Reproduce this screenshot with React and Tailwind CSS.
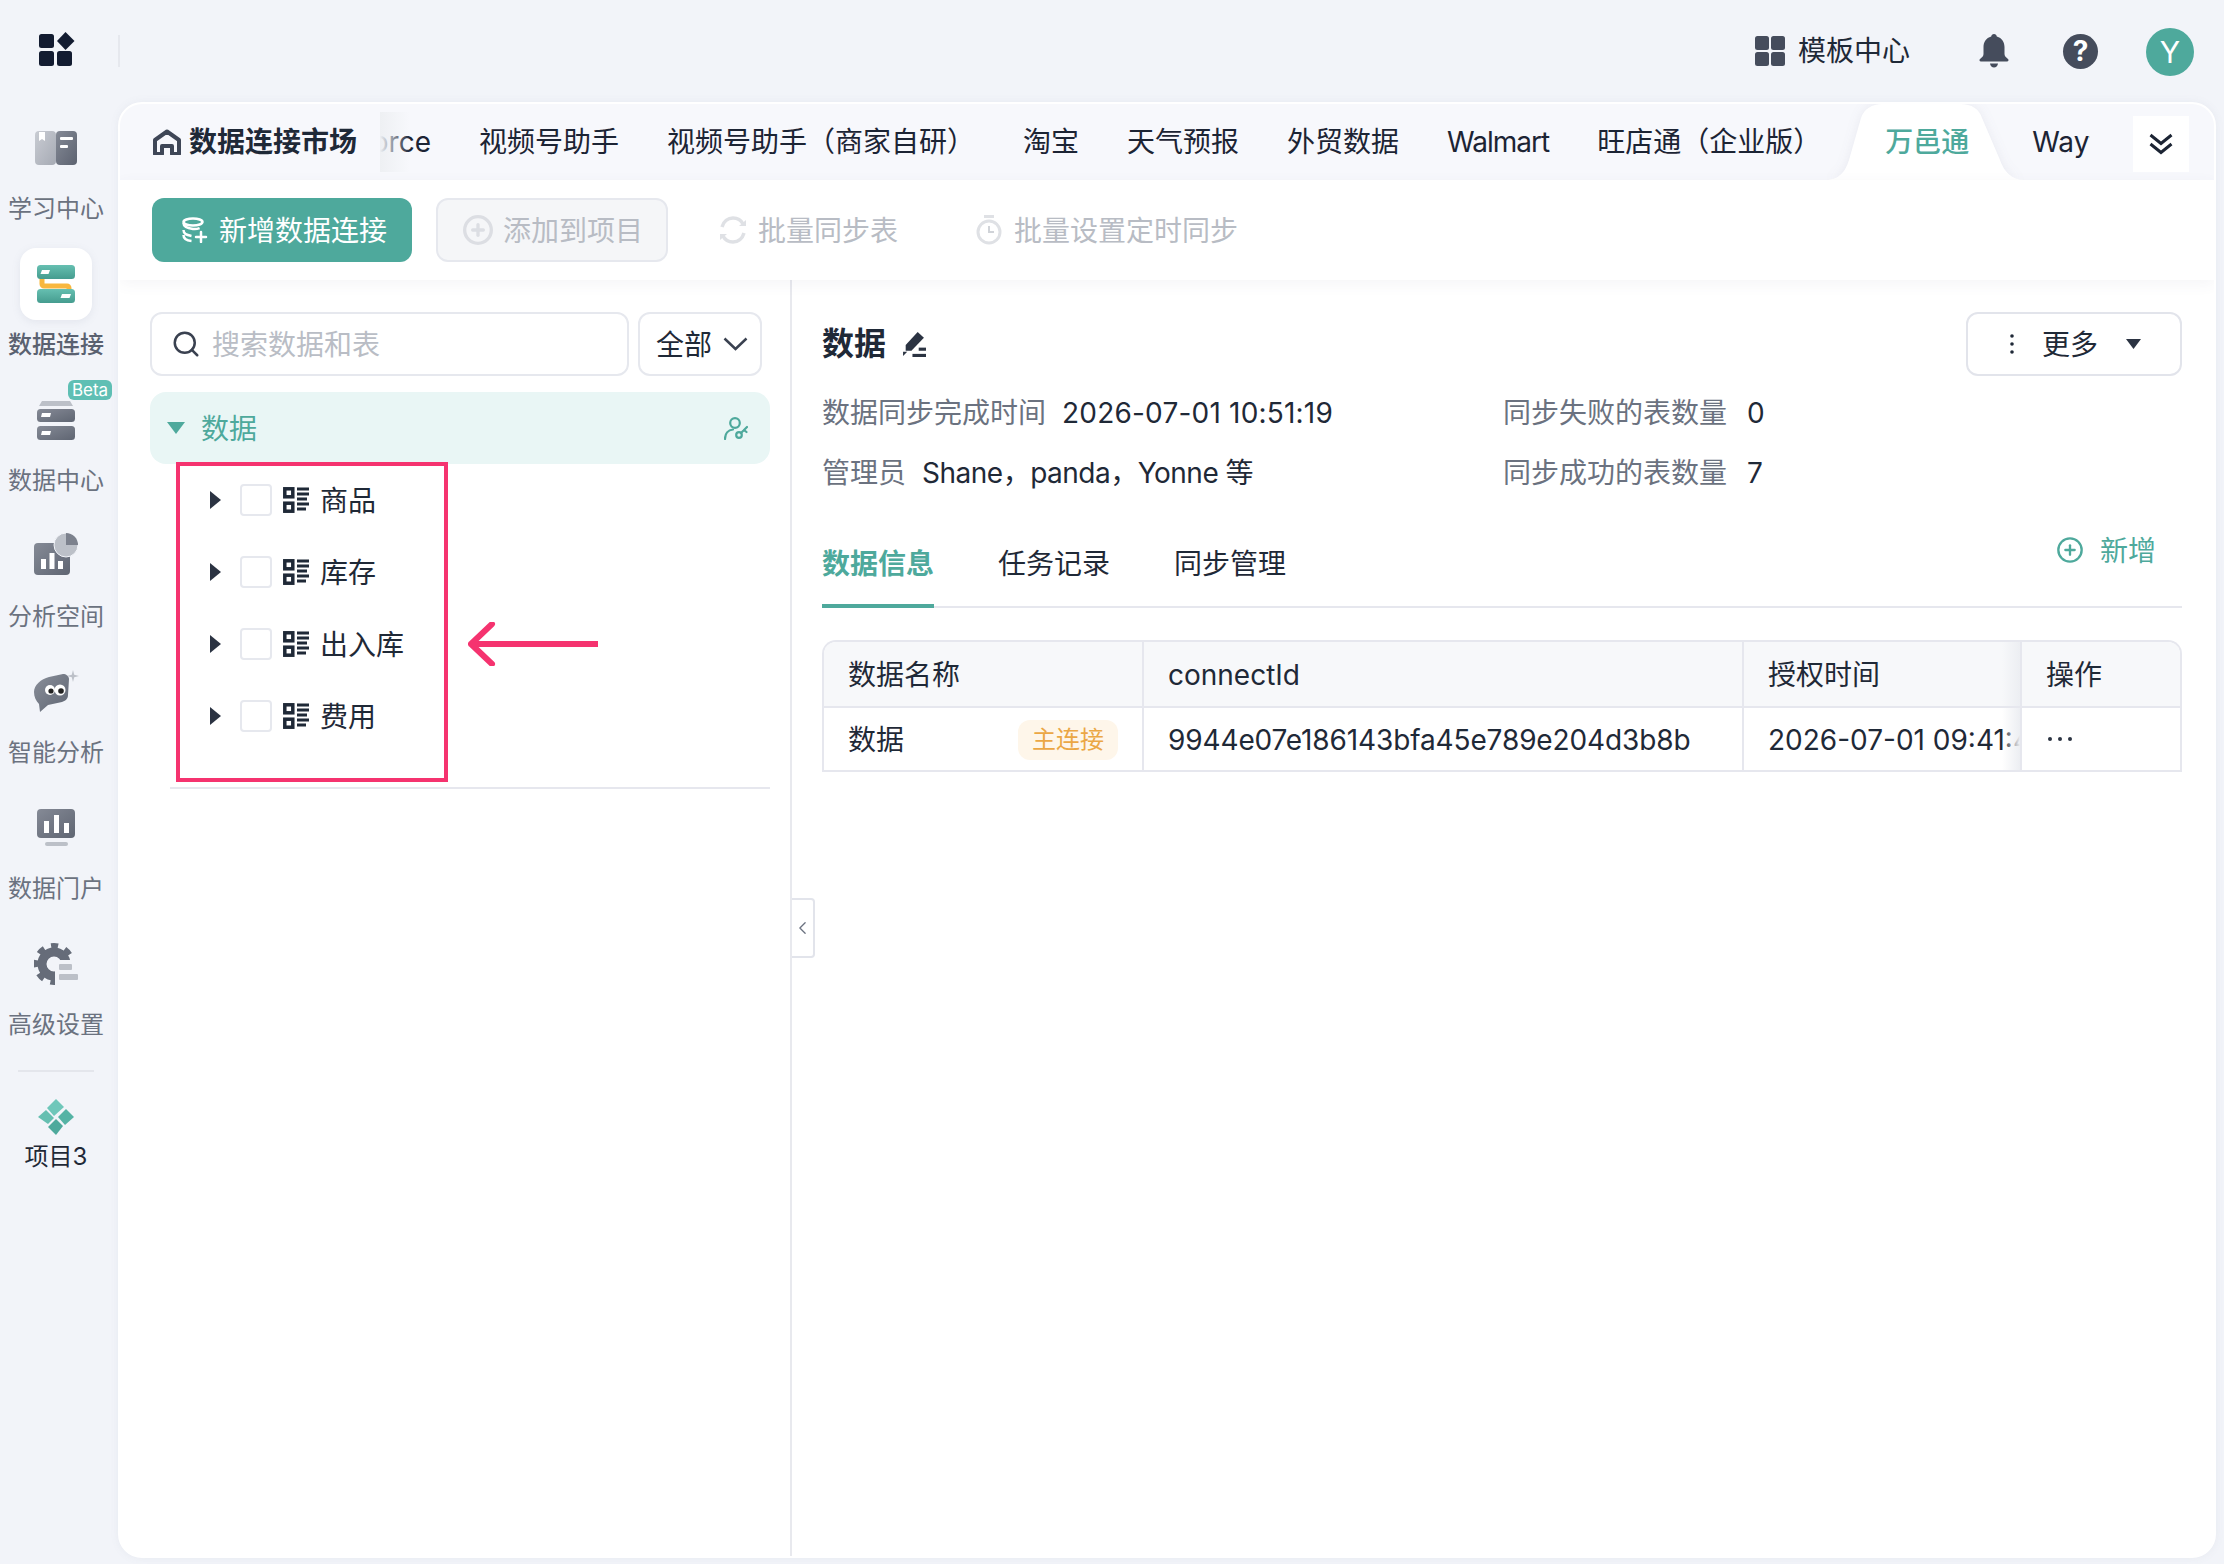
import { Search, ChevronLeft, CirclePlus } from "lucide-react";

const Grad = ({ id, from, to }) => (
  <linearGradient id={id} x1="0" y1="0" x2="1" y2="1">
    <stop offset="0" stopColor={from} />
    <stop offset="1" stopColor={to} />
  </linearGradient>
);

const BookIcon = () => (
  <svg width="42" height="34" viewBox="0 0 42 34">
    <defs>
      <Grad id="bookL" from="#c9ccd3" to="#a6aab4" />
      <Grad id="bookR" from="#858a96" to="#5c6270" />
    </defs>
    <rect x="0" y="0" width="21" height="34" rx="4" fill="url(#bookL)" />
    <rect x="21" y="0" width="21" height="34" rx="4" fill="url(#bookR)" />
    <path d="M4 1h6v9l-3-2-3 2z" fill="#fff" />
    <rect x="25" y="6" width="13" height="3" rx="1" fill="#fff" />
    <rect x="25" y="14" width="8" height="3" rx="1" fill="#fff" />
  </svg>
);

const ConnectIcon = () => (
  <svg width="38" height="38" viewBox="0 0 38 38">
    <defs>
      <linearGradient id="connT" x1="0" y1="0" x2="0" y2="1">
        <stop offset="0" stopColor="#66bfb1" />
        <stop offset="1" stopColor="#459c8f" />
      </linearGradient>
    </defs>
    <path d="M5 12v7a2 2 0 0 0 2 2h23a2 2 0 0 1 2 2v5" fill="none" stroke="#f8b73f" strokeWidth="5" />
    <rect x="0" y="0" width="38" height="14" rx="3.5" fill="url(#connT)" />
    <rect x="0" y="24" width="38" height="14" rx="3.5" fill="url(#connT)" />
    <path d="M5 5h8l-1.5 4H3.5z" fill="#fff" />
    <path d="M25 29h9l-1.5 4H23.5z" fill="#fff" />
  </svg>
);

const CenterIcon = () => (
  <svg width="38" height="39" viewBox="0 0 38 39">
    <defs>
      <Grad id="centerD" from="#858a96" to="#5f6572" />
    </defs>
    <path d="M5 0h28l3 5H2z" fill="#bcc0c8" />
    <rect x="0" y="8" width="38" height="13" rx="3.5" fill="url(#centerD)" />
    <rect x="0" y="25" width="38" height="14" rx="3.5" fill="url(#centerD)" />
    <path d="M5 12h9l-1 4H4z" fill="#fff" />
    <path d="M5 30h9l-1 4H4z" fill="#fff" />
  </svg>
);

const SpaceIcon = () => (
  <svg className="-mt-[4px]" width="44" height="42" viewBox="0 0 44 42">
    <defs>
      <Grad id="spaceD" from="#858a96" to="#5f6572" />
    </defs>
    <rect x="0" y="10" width="36" height="32" rx="4" fill="url(#spaceD)" />
    <rect x="7" y="26" width="5" height="10" fill="#fff" />
    <rect x="15.5" y="20" width="5" height="16" fill="#fff" />
    <rect x="24" y="28" width="5" height="8" fill="#fff" />
    <circle cx="32" cy="12" r="12" fill="#bcc0c8" stroke="#f2f4f9" strokeWidth="1" />
    <path d="M32 0a12 12 0 0 1 12 12H32z" fill="#7c818d" />
  </svg>
);

const SmartIcon = () => (
  <svg width="46" height="44" viewBox="0 0 46 44">
    <defs>
      <Grad id="smartD" from="#8a8f9a" to="#5f6572" />
    </defs>
    <path d="M1 22c0-7 7-13 15-15l14-3c3 0 6 2 6 5l-1 16c0 4-3 6-6 7l-14 3-8 7-1-8c-3-3-5-7-5-12z" fill="url(#smartD)" />
    <circle cx="17" cy="20" r="5" fill="#fff" />
    <circle cx="27" cy="20" r="5.5" fill="#fff" />
    <circle cx="18" cy="21" r="2.6" fill="#222" />
    <circle cx="28" cy="21" r="2.8" fill="#222" />
    <path d="M40 0l1.2 4.8L46 6l-4.8 1.2L40 12l-1.2-4.8L34 6l4.8-1.2z" fill="#bcc0c8" />
  </svg>
);

const PortalIcon = () => (
  <svg width="38" height="38" viewBox="0 0 38 38">
    <defs>
      <Grad id="portalD" from="#858a96" to="#5f6572" />
    </defs>
    <rect x="0" y="0" width="38" height="29" rx="4" fill="url(#portalD)" />
    <rect x="7" y="12" width="5" height="12" fill="#fff" />
    <rect x="17" y="6" width="5" height="18" fill="#fff" />
    <rect x="27" y="14" width="5" height="10" fill="#fff" />
    <rect x="8" y="33" width="23" height="4" rx="2" fill="#bcc0c8" />
  </svg>
);

const SettingIcon = () => (
  <svg width="44" height="42" viewBox="0 0 44 42">
    <defs>
      <clipPath id="gearCut">
        <path d="M0 0H44V17H21V42H0z" />
      </clipPath>
    </defs>
    <g clipPath="url(#gearCut)" fill="none" stroke="#666c79">
      <circle cx="20" cy="21" r="12" strokeWidth="9" />
      <circle cx="20" cy="21" r="18" strokeWidth="6" strokeDasharray="7 7.14" strokeDashoffset="3.500" />
    </g>
    <rect x="25" y="21" width="13" height="6" rx="1" fill="#bcc0c8" />
    <rect x="25" y="31" width="19" height="6" rx="1" fill="#bcc0c8" />
  </svg>
);

const ProjectIcon = () => (
  <svg width="36" height="36" viewBox="0 0 36 36">
    <path d="M18 0l8 8-10 9-7-8z" fill="#6fc7ba" />
    <path d="M8 11l8 8-6 6-10-7z" fill="#66bfb1" />
    <path d="M28 10l8 8-9 8-7-8z" fill="#55b3a5" />
    <path d="M18 20l7 7-7 9-8-8z" fill="#4ea99c" />
  </svg>
);

const Logo = () => (
  <svg width="36" height="34" viewBox="0 0 36 34">
    <rect x="0" y="2" width="15" height="14" rx="2.5" fill="#131c31" />
    <rect x="0" y="19" width="15" height="15" rx="2.5" fill="#131c31" />
    <rect x="18" y="19" width="15" height="15" rx="2.5" fill="#131c31" />
    <path d="M26.5 0L35.5 9 26.5 18 18 9z" fill="#131c31" />
  </svg>
);

const GridIcon = () => (
  <svg width="30" height="30" viewBox="0 0 30 30" fill="#454c5c">
    <rect x="0" y="0" width="14" height="14" rx="2.5" />
    <rect x="16" y="0" width="14" height="14" rx="2.5" />
    <rect x="0" y="16" width="14" height="14" rx="2.5" />
    <rect x="16" y="16" width="14" height="14" rx="2.5" />
  </svg>
);

const BellIcon = () => (
  <svg width="30" height="35" viewBox="0 0 30 35" fill="#454c5c">
    <path d="M15 0c1.6 0 2.6 1 2.8 2.4C23 3.800 25.500 8 25.500 13v7c0 2 1.500 3.500 3.500 5 1 .8.6 2.500-1 2.500H2c-1.600 0-2-1.700-1-2.500 2-1.500 3.500-3 3.500-5v-7c0-5 2.500-9.200 7.700-10.600C12.400 1 13.400 0 15 0z" />
    <path d="M11 29.500h8c-.4 2.500-2 4-4 4s-3.600-1.500-4-4z" />
  </svg>
);

const HomeIcon = () => (
  <svg width="28" height="26" viewBox="0 0 28 26" fill="none" stroke="#3f4757" strokeWidth="4">
    <path d="M2 25V11L14 2.500l12 8.500v14h-7v-8H9v8z" strokeLinejoin="round" />
  </svg>
);

const DbPlusIcon = () => (
  <svg width="27" height="26" viewBox="0 0 27 26" fill="none" stroke="#fff" strokeWidth="2.500">
    <ellipse cx="12" cy="5" rx="9.500" ry="3.500" />
    <path d="M2.500 6c0 3 2 5 9.500 6 3 .4 5-.2 7-1" strokeDasharray="19 2" />
    <path d="M2.500 13c0 4 3 5 8 6" />
    <path d="M2.500 18c0 4 3 5.500 8 6" />
    <path d="M20 15v10M15 20h10" strokeLinecap="round" />
  </svg>
);

const SyncIcon = () => (
  <svg width="30" height="30" viewBox="0 0 30 30" fill="none" stroke="#dfe1e5" strokeWidth="3.500">
    <path d="M4 12C5.500 6.500 10 3 15 3c4.500 0 8 2 10 6" />
    <path d="M26 18c-1.500 5.500-6 9-11 9-4.500 0-8-2-10-6" />
    <path d="M21 11h7V5z" fill="#dfe1e5" stroke="none" />
    <path d="M9 19H2v6z" fill="#dfe1e5" stroke="none" />
  </svg>
);

const TimerIcon = () => (
  <svg width="26" height="30" viewBox="0 0 26 30" fill="none" stroke="#dfe1e5" strokeWidth="3">
    <circle cx="13" cy="17" r="11" />
    <path d="M8 1.500h10" />
    <path d="M13 11v6h5" stroke="#d0d3d8" strokeWidth="2" />
  </svg>
);

const KeyUserIcon = () => (
  <svg width="24" height="23" viewBox="0 0 24 23" fill="none" stroke="#4ea99c" strokeWidth="2.200">
    <circle cx="11" cy="6" r="4.800" />
    <path d="M1 22c0-5 3-9 8-9.500" strokeLinecap="round" />
    <circle cx="15" cy="18" r="2.800" />
    <path d="M17 16l6-6M20 13l2.500 2" strokeLinecap="round" />
  </svg>
);

const EditIcon = () => (
  <svg width="25" height="25" viewBox="0 0 24 24" fill="#2b3342">
    <path d="M15 0l6 5.500L9 18H3.500v-5.500z" transform="translate(1 0)" />
    <path d="M2 19h4l-4 4z" />
    <rect x="11" y="21" width="13" height="3" />
    <rect x="17" y="15" width="7" height="3" />
  </svg>
);

const TableIcon = () => (
  <svg width="26" height="26" viewBox="0 0 26 26" fill="none" stroke="#1f2937" strokeWidth="3.500">
    <rect x="1.800" y="1.800" width="8" height="8" />
    <rect x="1.800" y="16.200" width="8" height="8" />
    <path d="M14 2h12M14 7h12M14 12h10M14 17h12M14 22h9" strokeWidth="3" />
  </svg>
);

const CaretRight = () => (
  <svg width="11" height="18" viewBox="0 0 11 18">
    <path d="M0 0l11 9-11 9z" fill="#2b3342" />
  </svg>
);

const navItems = [
  { label: "学习中心", icon: <BookIcon /> },
  { label: "数据连接", icon: <ConnectIcon />, active: true },
  { label: "数据中心", icon: <CenterIcon />, beta: true },
  { label: "分析空间", icon: <SpaceIcon /> },
  { label: "智能分析", icon: <SmartIcon /> },
  { label: "数据门户", icon: <PortalIcon /> },
  { label: "高级设置", icon: <SettingIcon /> },
];

const tabs = ["视频号助手", "视频号助手（商家自研）", "淘宝", "天气预报", "外贸数据", "Walmart", "旺店通（企业版）"];
const tables = ["商品", "库存", "出入库", "费用"];

function Sidebar() {
  return (
    <div className="w-[112px] mr-[6px] pt-[10px] flex flex-col items-center shrink-0">
      {navItems.map((item) => (
        <div key={item.label} className="relative h-[136px] w-full flex flex-col items-center">
          <div
            className={
              item.active
                ? "w-[72px] h-[72px] flex items-center justify-center bg-white rounded-[16px] shadow-[0_2px_8px_rgba(120,130,160,0.12)]"
                : "w-[72px] h-[72px] flex items-center justify-center"
            }
          >
            {item.icon}
          </div>
          <div
            className={
              item.active
                ? "mt-[8px] text-[24px] leading-[34px] font-medium text-[#5a6170]"
                : "mt-[8px] text-[24px] leading-[34px] text-[#6b7280]"
            }
          >
            {item.label}
          </div>
          {item.beta && (
            <div className="absolute left-[68px] top-[-4px] w-[44px] h-[20px] rounded-[6px] bg-[#5fbfb4] text-white text-[17px] leading-[20px] text-center">
              Beta
            </div>
          )}
        </div>
      ))}
      <div className="w-[76px] h-[2px] bg-[#e4e6ec] mt-[6px]" />
      <div className="mt-[27px]">
        <ProjectIcon />
      </div>
      <div className="mt-[5px] text-[24px] leading-[34px] text-[#1f2937]">项目3</div>
    </div>
  );
}

function TabBar() {
  return (
    <div className="h-[76px] bg-[#f7f8fc] flex items-stretch shrink-0">
      <div className="w-[260px] shrink-0 pl-[33px] flex items-center gap-[8px] text-[28px] font-semibold text-[#1f2937]">
        <HomeIcon />
        <span>数据连接市场</span>
      </div>
      <div className="relative w-[1710px] shrink-0 overflow-hidden flex items-center gap-[48px] text-[28px] text-[#1c2434] whitespace-nowrap">
        <div className="w-[51px] shrink-0 overflow-hidden flex justify-end">
          <span className="shrink-0">Salesforce</span>
        </div>
        {tabs.map((t) => (
          <span key={t} className={t === "Walmart" ? "shrink-0 tracking-[-1px]" : "shrink-0"}>
            {t}
          </span>
        ))}
        <div className="relative shrink-0 ml-[16px] mr-[15px] h-full flex items-center text-[#4ea99c] font-medium">
          <svg
            className="absolute left-[-59px] top-0 drop-shadow-[0_0_6px_rgba(60,70,100,0.08)]"
            width="198"
            height="76"
            viewBox="0 0 198 76"
          >
            <path
              d="M0 76C14 76 20 66 23 56L35 14C38 5 46 0 56 0H134C146 0 153 5 156 14L174 56C178 68 186 76 198 76Z"
              fill="#fff"
            />
          </svg>
          <span className="relative">万邑通</span>
        </div>
        <span className="shrink-0">Wayfair</span>
        <div className="absolute left-0 top-[8px] h-[60px] w-[30px] bg-gradient-to-r from-[#eef0f3] to-transparent" />
      </div>
      <div className="ml-[43px] mt-[12px] w-[56px] h-[56px] bg-white flex items-center justify-center">
        <svg width="24" height="22" viewBox="0 0 24 22" fill="none" stroke="#1c2434" strokeWidth="3">
          <path d="M1.500 2L12 10.500 22.500 2" />
          <path d="M1.500 11L12 19.500 22.500 11" />
        </svg>
      </div>
    </div>
  );
}

function Toolbar() {
  return (
    <div className="relative z-10 h-[100px] bg-white shrink-0 pl-[32px] flex items-center text-[28px] shadow-[0_4px_14px_rgba(80,90,120,0.06)]">
      <div className="w-[260px] h-[64px] rounded-[12px] bg-[#4ea99c] text-white flex items-center pl-[29px] gap-[11px]">
        <DbPlusIcon />
        <span className="pt-[2px]">新增数据连接</span>
      </div>
      <div className="ml-[24px] w-[232px] h-[64px] rounded-[12px] bg-[#f5f6f8] border-2 border-[#e6e8ee] text-[#b8bcc4] flex items-center pl-[24px] gap-[9px]">
        <CirclePlus size={32} color="#dcdee3" strokeWidth={2.500} />
        <span className="pt-[2px]">添加到项目</span>
      </div>
      <div className="ml-[50px] flex items-center gap-[10px] text-[#b8bcc4]">
        <SyncIcon />
        <span className="pt-[2px]">批量同步表</span>
      </div>
      <div className="ml-[78px] flex items-center gap-[12px] text-[#b8bcc4]">
        <TimerIcon />
        <span className="pt-[2px]">批量设置定时同步</span>
      </div>
    </div>
  );
}

function LeftPane() {
  return (
    <div className="relative w-[672px] shrink-0 border-r-2 border-[#e8e9ee] pl-[30px] pr-[20px] pt-[32px] text-[28px] text-[#1f2937]">
      <div className="flex gap-[9px]">
        <div className="w-[479px] h-[64px] rounded-[12px] border-2 border-[#e6e8ee] flex items-center pl-[19px] gap-[11px] text-[#b9bdc5]">
          <Search size={30} color="#3a4150" strokeWidth={2} />
          <span className="pt-[2px]">搜索数据和表</span>
        </div>
        <div className="w-[124px] h-[64px] rounded-[12px] border-2 border-[#e6e8ee] flex items-center pl-[16px] gap-[11px]">
          <span className="pt-[2px]">全部</span>
          <svg width="25" height="14" viewBox="0 0 25 14" fill="none" stroke="#3a4150" strokeWidth="2.500">
            <path d="M1.500 1.500L12.500 12 23.500 1.500" />
          </svg>
        </div>
      </div>
      <div className="mt-[16px] h-[72px] rounded-[16px] bg-[#e9f6f5] flex items-center pl-[17px] pr-[22px] text-[#4ea99c]">
        <svg width="18" height="12" viewBox="0 0 18 12">
          <path d="M0 0h18L9 12z" fill="#4ea99c" />
        </svg>
        <span className="ml-[16px] flex-1 pt-[2px]">数据</span>
        <KeyUserIcon />
      </div>
      {tables.map((name) => (
        <div key={name} className="h-[72px] flex items-center pl-[60px]">
          <CaretRight />
          <div className="ml-[19px] w-[32px] h-[32px] rounded-[4px] border-2 border-[#e6e8ee] bg-white" />
          <div className="ml-[11px]">
            <TableIcon />
          </div>
          <span className="ml-[11px] pt-[2px]">{name}</span>
        </div>
      ))}
      <div className="mt-[35px] ml-[20px] h-[2px] bg-[#e6e7ee]" />

      {/* 标注：红框和箭头 */}
      <div className="absolute left-[56px] top-[182px] w-[272px] h-[320px] border-[4px] border-[#f5336f]" />
      <svg className="absolute left-[348px] top-[342px]" width="130" height="44" viewBox="0 0 130 44">
        <path d="M130 22H3M24 2L3 22l21 20" fill="none" stroke="#f5336f" strokeWidth="6" strokeLinecap="round" strokeLinejoin="round" />
      </svg>
    </div>
  );
}

function InfoItem({ label, value, valueClass }) {
  return (
    <div className="flex items-center h-[60px] pt-[2px]">
      <span className="text-[#6b7280]">{label}</span>
      <span className={"text-[#1f2937] " + (valueClass || "ml-[16px]")}>{value}</span>
    </div>
  );
}

function RightPane() {
  return (
    <div className="relative flex-1 pl-[30px] pr-[32px] pt-[32px] text-[28px] text-[#1f2937]">
      <div className="absolute left-0 top-[618px] w-[23px] h-[60px] bg-white border-2 border-l-0 border-[#e2e4eb] rounded-r-[4px] flex items-center justify-center">
        <ChevronLeft size={24} color="#6b7280" strokeWidth={1.500} />
      </div>

      <div className="flex items-start justify-between h-[70px]">
        <div className="h-[64px] flex items-center gap-[15px]">
          <span className="text-[32px] font-semibold">数据</span>
          <EditIcon />
        </div>
        <div className="w-[216px] h-[64px] rounded-[12px] border-2 border-[#e2e4eb] flex items-center pl-[42px]">
          <svg width="4" height="20" viewBox="0 0 4 20" fill="#1f2937">
            <circle cx="2" cy="2" r="1.800" />
            <circle cx="2" cy="10" r="1.800" />
            <circle cx="2" cy="18" r="1.800" />
          </svg>
          <span className="ml-[28px] pt-[2px]">更多</span>
          <svg className="ml-[28px]" width="15" height="10" viewBox="0 0 15 10">
            <path d="M0 0h15L7.500 10z" fill="#2b3342" />
          </svg>
        </div>
      </div>

      <div className="flex">
        <div className="w-[681px]">
          <InfoItem label="数据同步完成时间" value="2026-07-01 10:51:19" valueClass="ml-[16px] tracking-[0.2px]" />
          <InfoItem label="管理员" value="Shane，panda，Yonne 等" valueClass="ml-[16px] tracking-[-0.5px]" />
        </div>
        <div>
          <InfoItem label="同步失败的表数量" value="0" valueClass="ml-[20px]" />
          <InfoItem label="同步成功的表数量" value="7" valueClass="ml-[20px]" />
        </div>
      </div>

      <div className="h-[106px] border-b-2 border-[#e6e7ee] flex justify-between">
        <div className="flex gap-[64px] self-end">
          <div className="relative pt-[2px] pb-[24px] leading-[36px] text-[#4ea99c] font-semibold">
            数据信息
            <div className="absolute left-0 right-0 bottom-[-2px] h-[4px] bg-[#4ea99c]" />
          </div>
          <div className="pt-[2px] pb-[24px] leading-[36px]">任务记录</div>
          <div className="pt-[2px] pb-[24px] leading-[36px]">同步管理</div>
        </div>
        <div className="mt-[30px] mr-[26px] h-[36px] flex items-center gap-[16px] text-[#4ea99c]">
          <CirclePlus size={28} color="#4ea99c" strokeWidth={2} />
          <span className="pt-[2px]">新增</span>
        </div>
      </div>

      <div className="mt-[32px] border-2 border-b-0 border-[#e6e7ee] rounded-t-[14px] overflow-hidden">
        <div className="flex h-[66px] bg-[#f7f8fa] border-b-2 border-[#e6e7ee] items-stretch">
          <div className="w-[320px] pl-[24px] pt-[2px] flex items-center border-r-2 border-[#e6e7ee]">数据名称</div>
          <div className="w-[600px] pl-[24px] pt-[2px] flex items-center border-r-2 border-[#e6e7ee]">connectId</div>
          <div className="relative w-[278px] pl-[24px] pt-[2px] flex items-center border-r-2 border-[#e6e7ee]">
            授权时间
            <div className="absolute right-0 top-0 bottom-0 w-[18px] bg-gradient-to-l from-[#eceef2] to-transparent" />
          </div>
          <div className="flex-1 pl-[24px] pt-[2px] flex items-center">操作</div>
        </div>
        <div className="flex h-[64px] border-b-2 border-[#e6e7ee] items-stretch">
          <div className="w-[320px] pl-[24px] pt-[2px] flex items-center border-r-2 border-[#e6e7ee]">
            <span className="flex-1">数据</span>
            <span className="mr-[24px] w-[100px] h-[40px] rounded-[12px] bg-[#fef6ea] text-[#eba745] text-[24px] flex items-center justify-center">
              主连接
            </span>
          </div>
          <div className="w-[600px] pl-[24px] pt-[2px] flex items-center border-r-2 border-[#e6e7ee] tracking-[-0.13px]">
            9944e07e186143bfa45e789e204d3b8b
          </div>
          <div className="relative w-[278px] pl-[24px] pt-[2px] flex items-center border-r-2 border-[#e6e7ee] overflow-hidden whitespace-nowrap">
            <span className="shrink-0">2026-07-01 09:41:46</span>
            <div className="absolute right-0 top-0 bottom-0 w-[18px] bg-gradient-to-l from-[#eceef2] to-transparent" />
          </div>
          <div className="flex-1 pl-[26px] flex items-center">
            <svg width="24" height="4" viewBox="0 0 24 4" fill="#2b3342">
              <circle cx="2" cy="2" r="2" />
              <circle cx="12" cy="2" r="2" />
              <circle cx="22" cy="2" r="2" />
            </svg>
          </div>
        </div>
      </div>
    </div>
  );
}

export default function App() {
  return (
    <div className="w-[2224px] h-[1564px] bg-[#f2f4f9] flex flex-col overflow-hidden font-['Inter','Noto_Sans_CJK_SC',sans-serif]">
      {/* 顶部栏 */}
      <div className="h-[102px] shrink-0 flex items-center">
        <div className="ml-[39px] -mt-[4px]">
          <Logo />
        </div>
        <div className="ml-[43px] w-[2px] h-[32px] bg-[#e6e8ee]" />
        <div className="ml-auto flex items-center text-[28px] text-[#1f2937]">
          <GridIcon />
          <span className="ml-[13px]">模板中心</span>
          <div className="ml-[69px]">
            <BellIcon />
          </div>
          <div className="ml-[54px] w-[35px] h-[35px] rounded-full bg-[#454c5c] flex items-center justify-center text-white text-[28px] font-bold">
            ?
          </div>
          <div className="ml-[48px] mr-[30px] mt-[2px] w-[48px] h-[48px] rounded-full bg-[#4ea99c] flex items-center justify-center text-white text-[30px]">
            Y
          </div>
        </div>
      </div>

      <div className="flex-1 flex pb-[6px] pr-[8px]">
        <Sidebar />
        <div className="flex-1 flex flex-col bg-white border-2 border-white rounded-[24px] overflow-hidden shadow-[0_0_8px_rgba(100,110,140,0.08)]">
          <TabBar />
          <Toolbar />
          <div className="flex-1 flex min-h-0">
            <LeftPane />
            <RightPane />
          </div>
        </div>
      </div>
    </div>
  );
}
